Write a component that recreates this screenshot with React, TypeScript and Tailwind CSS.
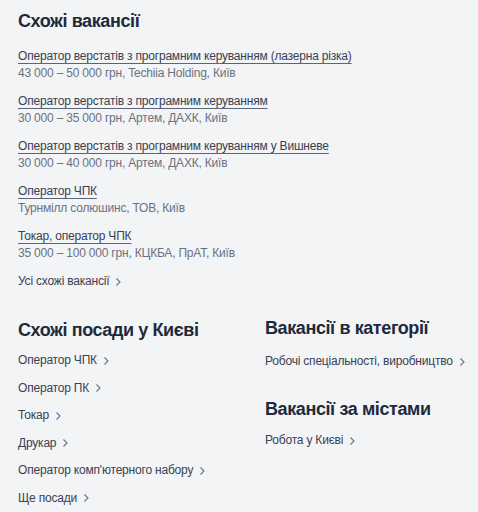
import React from 'react';

interface Vacancy {
  title: string;
  meta: string;
}

const vacancies: Vacancy[] = [
  {
    title: 'Оператор верстатів з програмним керуванням (лазерна різка)',
    meta: '43 000 – 50 000 грн, Techiia Holding, Київ',
  },
  {
    title: 'Оператор верстатів з програмним керуванням',
    meta: '30 000 – 35 000 грн, Артем, ДАХК, Київ',
  },
  {
    title: 'Оператор верстатів з програмним керуванням у Вишневе',
    meta: '30 000 – 40 000 грн, Артем, ДАХК, Київ',
  },
  {
    title: 'Оператор ЧПК',
    meta: 'Турнмілл солюшинс, ТОВ, Київ',
  },
  {
    title: 'Токар, оператор ЧПК',
    meta: '35 000 – 100 000 грн, КЦКБА, ПрАТ, Київ',
  },
];

const positions = [
  'Оператор ЧПК',
  'Оператор ПК',
  'Токар',
  'Друкар',
  "Оператор комп'ютерного набору",
  'Ще посади',
];

const Chevron = () => (
  <svg width="8" height="10" viewBox="0 0 8 10" className="ml-[5px] shrink-0" fill="none">
    <path d="M2.5 1.5L6 5L2.5 8.5" stroke="#6b7280" strokeWidth="1.1" />
  </svg>
);

const ArrowLink = ({ label, className = '' }: { label: string; className?: string }) => (
  <a
    href="#"
    className={`flex w-fit items-center whitespace-nowrap text-[12px] leading-[17px] text-[#394152] ${className}`}
  >
    {label}
    <Chevron />
  </a>
);

const Heading = ({ children, className = '' }: { children: React.ReactNode; className?: string }) => (
  <h2 className={`text-[18px] font-bold leading-[24px] tracking-[-0.4px] text-[#1e2a3b] ${className}`}>
    {children}
  </h2>
);

const App = () => {
  return (
    <div
      className="min-h-[512px] bg-[#f3f4f6] px-[18px] pt-[9px] leading-[17px] tracking-[-0.2px]"
      style={{ fontFamily: '"Liberation Sans", Arial, sans-serif' }}
    >
      {/* Similar vacancies */}
      <Heading>Схожі вакансії</Heading>
      <ul className="mt-[15px] flex flex-col gap-[11px]">
        {vacancies.map((v) => (
          <li key={v.title} className="flex flex-col">
            <a
              href="#"
              className="self-start text-[12px] leading-[17px] text-[#394152] underline decoration-[#5b6478] underline-offset-[3px]"
            >
              {v.title}
            </a>
            <span className="text-[12px] leading-[17px] text-[#6b7280]">{v.meta}</span>
          </li>
        ))}
      </ul>
      <ArrowLink label="Усі схожі вакансії" className="mt-[11px]" />

      {/* Bottom columns */}
      <div className="mt-[28px] grid grid-cols-[247px_1fr]">
        <div>
          <Heading>Схожі посади у Києві</Heading>
          <ul className="mt-[10px] flex flex-col gap-[10.6px]">
            {positions.map((p) => (
              <li key={p} className="flex">
                <ArrowLink label={p} />
              </li>
            ))}
          </ul>
        </div>
        <div className="-mt-[2px]">
          <Heading>Вакансії в категорії</Heading>
          <ArrowLink label="Робочі спеціальності, виробництво" className="mt-[13px]" />
          <Heading className="mt-[27px]">Вакансії за містами</Heading>
          <ArrowLink label="Робота у Києві" className="mt-[11px]" />
        </div>
      </div>
    </div>
  );
};

export default App;
